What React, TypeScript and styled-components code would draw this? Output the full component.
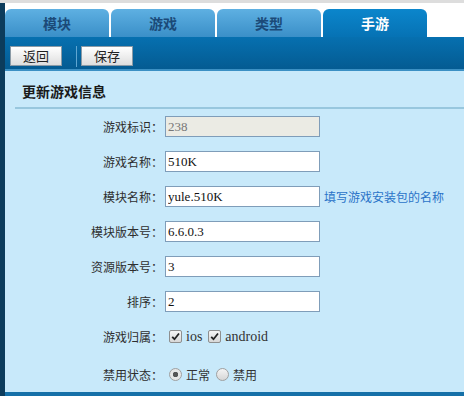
import styled, { createGlobalStyle } from 'styled-components';

const GlobalStyle = createGlobalStyle`
  html, body {
    margin: 0;
    padding: 0;
    background: #ffffff;
  }
  body {
    font-family: "Liberation Serif", "Noto Sans CJK SC", serif;
    font-size: 12px;
    color: #333;
  }
`;

const tabs = ['模块', '游戏', '类型', '手游'];

type Field = { label: string; value: string; disabled?: boolean; hint?: string };

const fields: Field[] = [
  { label: '游戏标识：', value: '238', disabled: true },
  { label: '游戏名称：', value: '510K' },
  { label: '模块名称：', value: 'yule.510K', hint: '填写游戏安装包的名称' },
  { label: '模块版本号：', value: '6.6.0.3' },
  { label: '资源版本号：', value: '3' },
  { label: '排序：', value: '2' },
];

function Check() {
  return (
    <CheckBox>
      <svg width="9" height="9" viewBox="0 0 9 9">
        <path d="M1.2 4.8 L3.5 7.2 L8 1.5" fill="none" stroke="#222" strokeWidth="1.8" />
      </svg>
    </CheckBox>
  );
}

function App() {
  return (
    <>
      <GlobalStyle />
      <Page>
        <SideStrip />
        <Main>
          <TabBar>
            {tabs.map((t, i) => (
              <Tab key={t} active={i === 3}>{t}</Tab>
            ))}
          </TabBar>
          <Toolbar>
            <ToolButton>返回</ToolButton>
            <Separator />
            <ToolButton>保存</ToolButton>
          </Toolbar>
          <Content>
            <Heading>更新游戏信息</Heading>
            <Form>
              {fields.map(f => (
                <Row key={f.label}>
                  <Label>{f.label}</Label>
                  <TextInput defaultValue={f.value} disabled={f.disabled} />
                  {f.hint && <Hint>{f.hint}</Hint>}
                </Row>
              ))}
              <Row>
                <Label>游戏归属：</Label>
                <Choice>
                  <Check />
                  <ChoiceText>ios</ChoiceText>
                </Choice>
                <Choice>
                  <Check />
                  <ChoiceText>android</ChoiceText>
                </Choice>
              </Row>
              <Row tall>
                <Label>禁用状态：</Label>
                <Choice>
                  <Radio checked />
                  <ChoiceText cjk>正常</ChoiceText>
                </Choice>
                <Choice>
                  <Radio />
                  <ChoiceText cjk>禁用</ChoiceText>
                </Choice>
              </Row>
            </Form>
          </Content>
          <BottomBar />
        </Main>
      </Page>
    </>
  );
}

// Styled components
const Page = styled.div`
  display: flex;
  height: 396px;
  border-top: 3px solid #dddddd;
  box-sizing: border-box;
  overflow: hidden;
`;

const SideStrip = styled.div`
  width: 5px;
  flex-shrink: 0;
  background: #0c3c5c;
`;

const Main = styled.div`
  flex: 1;
  display: flex;
  flex-direction: column;
  min-width: 0;
`;

const TabBar = styled.div`
  flex-shrink: 0;
  display: flex;
  gap: 2px;
  padding-top: 6px;
  height: 28px;
  background: #ffffff;
`;

const Tab = styled.div<{ active?: boolean }>`
  width: 104px;
  height: 28px;
  display: flex;
  align-items: center;
  justify-content: center;
  border-radius: 6px 6px 0 0;
  font-family: "Noto Sans CJK SC", sans-serif;
  font-size: 14px;
  font-weight: bold;
  color: ${p => (p.active ? '#ffffff' : '#1b4a78')};
  background: ${p =>
    p.active
      ? 'linear-gradient(#0b86cc, #0672b4)'
      : 'linear-gradient(#5eb0e2, #3a8fc8)'};
`;

const Toolbar = styled.div`
  flex-shrink: 0;
  height: 34px;
  box-sizing: border-box;
  display: flex;
  align-items: flex-start;
  padding: 9px 0 0 5px;
  background: linear-gradient(#0670b0, #045b92);
  border-bottom: 2px solid #3b90c4;
`;

const ToolButton = styled.button`
  width: 52px;
  height: 20px;
  padding: 0;
  border: 1px solid #8a9aa6;
  background: linear-gradient(#ffffff, #dedede);
  font-family: "Noto Sans CJK SC", sans-serif;
  font-size: 13px;
  line-height: 18px;
  color: #222;
`;

const Separator = styled.div`
  width: 1px;
  height: 21px;
  margin: 0 4px 0 14px;
  background: #5fa6d2;
`;

const Content = styled.div`
  flex: 1;
  min-height: 0;
  overflow: hidden;
  background: #c8e9fa;
`;

const Heading = styled.div`
  margin-left: 10px;
  height: 32px;
  padding: 4px 0 0 7px;
  display: flex;
  align-items: center;
  border-bottom: 2px solid #98c7de;
  font-family: "Noto Sans CJK SC", sans-serif;
  font-size: 14px;
  font-weight: bold;
  color: #1a1a1a;
`;

const Form = styled.div`
  display: flex;
  flex-direction: column;
`;

const Row = styled.div<{ tall?: boolean }>`
  display: flex;
  align-items: center;
  flex-shrink: 0;
  height: ${p => (p.tall ? '41px' : '35px')};
`;

const Label = styled.div`
  width: 158px;
  text-align: right;
  font-family: "Noto Sans CJK SC", sans-serif;
  font-size: 12px;
  color: #2e2e2e;
  padding-right: 2px;
  white-space: nowrap;
`;

const TextInput = styled.input`
  width: 155px;
  height: 21px;
  box-sizing: border-box;
  padding: 0 2px;
  border: 1px solid #7f9db9;
  background: #ffffff;
  font-family: "Liberation Serif", serif;
  font-size: 13px;
  color: #111;
  outline: none;

  &:disabled {
    background: #ebebe4;
    color: #777;
  }
`;

const Hint = styled.span`
  margin-left: 4px;
  font-family: "Noto Sans CJK SC", sans-serif;
  font-size: 12px;
  color: #2a73c8;
`;

const Choice = styled.label`
  display: flex;
  align-items: center;
  margin-left: 4px;
  margin-right: 2px;
`;

const CheckBox = styled.span`
  width: 11px;
  height: 11px;
  display: flex;
  align-items: center;
  justify-content: center;
  border: 1px solid #8e8f8f;
  border-radius: 2px;
  background: linear-gradient(#f4f4f4, #d8d8d8);
`;

const Radio = styled.span<{ checked?: boolean }>`
  width: 11px;
  height: 11px;
  border-radius: 50%;
  border: 1px solid #a0a0a0;
  background: ${p =>
    p.checked
      ? 'radial-gradient(circle, #555 0 2.5px, #e6e6e6 3px)'
      : 'linear-gradient(#f4f4f4, #d6d6d6)'};
`;

const ChoiceText = styled.span<{ cjk?: boolean }>`
  margin-left: 4px;
  font-family: ${p => (p.cjk ? '"Noto Sans CJK SC", sans-serif' : '"Liberation Serif", serif')};
  font-size: ${p => (p.cjk ? '12px' : '14px')};
  color: #333;
`;

const BottomBar = styled.div`
  flex-shrink: 0;
  height: 4px;
  background: #1570a8;
`;

export default App;
